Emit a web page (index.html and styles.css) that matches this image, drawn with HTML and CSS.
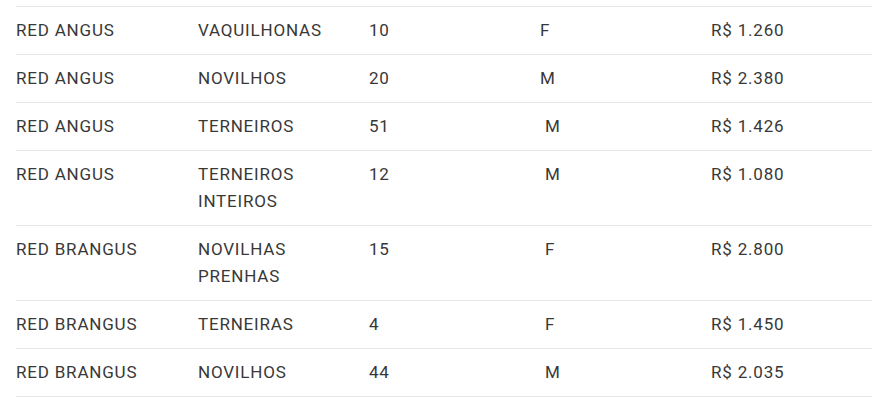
FILE: index.html
```html
<!DOCTYPE html>
<html lang="pt-BR">
<head>
<meta charset="utf-8">
<title>Lotes</title>
<link rel="stylesheet" href="styles.css">
</head>
<body>
<div class="wrap">
<table class="lotes">
<colgroup>
<col class="c-raca"><col class="c-cat"><col class="c-qtd"><col class="c-sexo"><col class="c-preco">
</colgroup>
<tbody>
<tr><td>RED ANGUS</td><td>VAQUILHONAS</td><td>10</td><td>F</td><td>R$ 1.260</td></tr>
<tr><td>RED ANGUS</td><td>NOVILHOS</td><td>20</td><td>M</td><td>R$ 2.380</td></tr>
<tr><td>RED ANGUS</td><td>TERNEIROS</td><td>51</td><td>&nbsp;M</td><td>R$ 1.426</td></tr>
<tr><td>RED ANGUS</td><td>TERNEIROS<br>INTEIROS</td><td>12</td><td>&nbsp;M</td><td>R$ 1.080</td></tr>
<tr><td>RED BRANGUS</td><td>NOVILHAS<br>PRENHAS</td><td>15</td><td>&nbsp;F</td><td>R$ 2.800</td></tr>
<tr><td>RED BRANGUS</td><td>TERNEIRAS</td><td>4</td><td>&nbsp;F</td><td>R$ 1.450</td></tr>
<tr><td>RED BRANGUS</td><td>NOVILHOS</td><td>44</td><td>&nbsp;M</td><td>R$ 2.035</td></tr>
</tbody>
</table>
</div>
</body>
</html>
```
FILE: styles.css
```css
html, body {
  margin: 0;
  padding: 0;
  background: #ffffff;
}
.wrap {
  padding: 6px 17px 0 16px;
}
.lotes {
  width: 856px;
  border-collapse: collapse;
  table-layout: fixed;
  font-family: Roboto, "Liberation Sans", sans-serif;
  font-size: 17px;
  letter-spacing: 0.8px;
  line-height: 27px;
  color: #383838;
}
.c-raca { width: 182px; }
.c-cat { width: 171px; }
.c-qtd { width: 171px; }
.c-sexo { width: 171px; }
.c-preco { width: 161px; }
.lotes tr {
  border-top: 1px solid #e6e6e6;
}
.lotes tr:last-child {
  border-bottom: 1px solid #e6e6e6;
}
.lotes td {
  padding: 10px 0;
  vertical-align: top;
  text-align: left;
}
```
